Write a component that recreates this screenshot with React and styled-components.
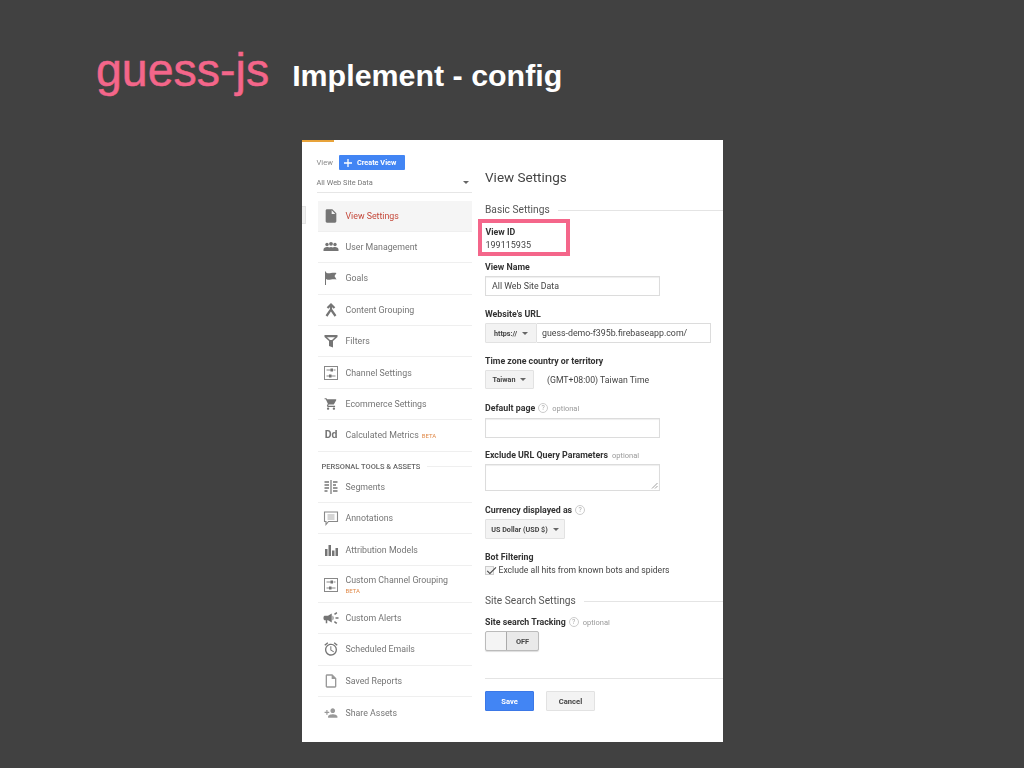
import React from 'react'
import styled, { createGlobalStyle } from 'styled-components'
import { MdInsertDriveFile, MdShoppingCart, MdCampaign, MdOutlineAccessAlarm, MdOutlineInsertDriveFile, MdPersonAdd, MdCheck } from 'react-icons/md'

const Global = createGlobalStyle`
  html, body { margin: 0; padding: 0; background: #414141; }
  * { box-sizing: border-box; }
`
const Slide = styled.div`
  width: 1024px;
  height: 768px;
  overflow: hidden;
  background: #414141;
  display: flex;
  flex-direction: column;
`
const TitleRow = styled.div`
  height: 140px;
  padding: 43px 0 0 96px;
  display: flex;
  align-items: flex-start;
  font-family: "Liberation Sans", Arial, sans-serif;
`
const MainTitle = styled.span`
  color: #f4668a;
  font-size: 46.5px;
  line-height: 54px;
  -webkit-text-stroke: 0.5px #f4668a;
`
const SubTitle = styled.span`
  color: #fff;
  font-size: 30.4px;
  font-weight: bold;
  line-height: 34px;
  margin: 15px 0 0 23px;
`
const Panel = styled.div`
  position: relative;
  align-self: center;
  width: 421px;
  height: 602px;
  background: #fff;
  display: flex;
  font-family: Roboto, "Liberation Sans", sans-serif;
  color: #333;
  filter: blur(0.35px);
`
const LoadBar = styled.div`
  position: absolute;
  left: 0;
  top: 0;
  width: 32px;
  height: 2px;
  background: #e8a33a;
`
const SideTab = styled.div`
  position: absolute;
  left: 0;
  top: 66px;
  width: 4px;
  height: 18px;
  background: #f0f0f0;
  border: 1px solid #e4e4e4;
  border-left: none;
`
const Sidebar = styled.div`
  width: 170px;
  padding: 15px 0 0 15px;
  flex: none;
`
const ViewHead = styled.div`
  display: flex;
  align-items: center;
  gap: 6px;
  height: 15px;
  font-size: 7.6px;
  color: #8a8a8a;
`
const CreateButton = styled.div`
  width: 66px;
  height: 15px;
  background: #4285f4;
  border-radius: 1px;
  color: #fff;
  font-size: 7.3px;
  font-weight: 700;
  display: flex;
  align-items: center;
  gap: 4px;
  padding-left: 4px;
`
const ViewSelect = styled.div`
  margin-top: 7px;
  height: 16px;
  padding: 0 3px 4px 0;
  border-bottom: 1px solid #e6e6e6;
  display: flex;
  align-items: center;
  justify-content: space-between;
  font-size: 7.4px;
  color: #777;
`
const Caret = styled.span`
  display: inline-block;
  width: 0;
  height: 0;
  border-left: ${p => p.$size || 3}px solid transparent;
  border-right: ${p => p.$size || 3}px solid transparent;
  border-top: ${p => p.$size || 3}px solid ${p => p.$color || '#666'};
`
const NavList = styled.div`
  margin: 7.5px 0 0 1px;
`
const NavItem = styled.div`
  height: ${p => p.$height || 31.4}px;
  padding-top: ${p => p.$pad || 0}px;
  display: flex;
  align-items: center;
  border-bottom: 1px solid #efefef;
  background: ${p => (p.$active ? '#f5f5f5' : 'transparent')};
  color: ${p => (p.$active ? '#c5483a' : '#757575')};
  font-size: 8.8px;
  &:last-child {
    border-bottom: none;
  }
`
const IconSlot = styled.span`
  width: 27px;
  margin-right: 1px;
  display: flex;
  justify-content: center;
  flex: none;
  color: ${p => p.$color || '#757575'};
  font-size: 16px;
  line-height: 1;
`
const DdIcon = styled.span`
  font-size: 10.5px;
  font-weight: 700;
`
const Beta = styled.span`
  color: #e08a4a;
  font-size: 6px;
  margin-left: 3px;
`
const BetaLine = styled.div`
  color: #e08a4a;
  font-size: 6px;
  margin-top: 2px;
`
const NavHeader = styled.div`
  height: 20px;
  display: flex;
  align-items: center;
  gap: 7px;
  padding: 10px 0 0 4px;
  font-size: 7.5px;
  font-weight: 500;
  color: #666;
  white-space: nowrap;
  &::after {
    content: '';
    flex: 1;
    height: 1px;
    background: #efefef;
  }
`
const Content = styled.div`
  flex: 1;
  padding: 29px 0 0 13.5px;
  min-width: 0;
`
const PageTitle = styled.div`
  font-size: 13.5px;
  line-height: 16px;
  color: #444;
`
const SectionTitle = styled.div`
  margin-top: ${p => p.$top}px;
  display: flex;
  align-items: center;
  gap: 8px;
  font-size: 10.2px;
  line-height: 14px;
  color: #555;
  white-space: nowrap;
  &::after {
    content: '';
    flex: 1;
    height: 1px;
    background: #e4e4e4;
  }
`
const HighlightBox = styled.div`
  width: 92px;
  height: 37px;
  margin: 2px 0 0 -7px;
  padding: 2.5px 0 0 3.5px;
  border: 4px solid #f4668a;
`
const Label = styled.div`
  margin-top: ${p => p.$top || 0}px;
  display: flex;
  align-items: center;
  gap: 3px;
  height: 12px;
  font-size: 8.8px;
  font-weight: 700;
  color: #333;
  white-space: nowrap;
`
const Value = styled.div`
  font-size: 9px;
  line-height: 12px;
  margin-top: 1.5px;
  color: #444;
`
const Help = styled.span`
  width: 10px;
  height: 10px;
  border: 1px solid #ccc;
  border-radius: 50%;
  color: #aaa;
  font-size: 7px;
  font-weight: 400;
  display: inline-flex;
  align-items: center;
  justify-content: center;
`
const Optional = styled.span`
  color: #999;
  font-size: 7.5px;
  font-weight: 400;
  margin-left: 1px;
`
const Input = styled.div`
  width: ${p => p.$width || 175}px;
  height: ${p => p.$height || 20}px;
  margin-top: ${p => p.$top ?? 3}px;
  padding-left: 6px;
  position: relative;
  display: flex;
  align-items: center;
  border: 1px solid #dcdcdc;
  box-shadow: inset 0 1px 1px #eee;
  font-size: 8.8px;
  color: #444;
`
const UrlRow = styled.div`
  margin-top: 3px;
  display: flex;
  width: 226px;
  height: 20px;
`
const GreyButton = styled.div`
  width: ${p => p.$width}px;
  height: ${p => p.$height || 20}px;
  flex: none;
  display: flex;
  align-items: center;
  justify-content: center;
  gap: 5px;
  background: #f3f3f3;
  border: 1px solid #e2e2e2;
  border-radius: 1px;
  font-size: 7.2px;
  font-weight: 700;
  color: #444;
`
const UrlInput = styled.div`
  flex: 1;
  display: flex;
  align-items: center;
  padding-left: 5px;
  border: 1px solid #dcdcdc;
  border-left: none;
  font-size: 8.8px;
  color: #444;
`
const ZoneRow = styled.div`
  margin-top: 3px;
  display: flex;
  align-items: center;
  gap: 13px;
  font-size: 8.7px;
  color: #444;
`
const ResizeGrip = styled.svg`
  position: absolute;
  right: 1px;
  bottom: 1px;
`
const CheckRow = styled.div`
  margin-top: 2px;
  display: flex;
  align-items: center;
  gap: 4.5px;
  font-size: 8.65px;
  color: #444;
`
const CheckBox = styled.span`
  width: 9px;
  height: 9px;
  flex: none;
  position: relative;
  background: #f2f2f2;
  border: 1px solid #ccc;
  display: inline-block;
  & svg {
    position: absolute;
    left: -1px;
    top: -3px;
    color: #444;
  }
`
const Toggle = styled.div`
  margin-top: 3px;
  width: 54px;
  height: 20px;
  display: flex;
  border: 1px solid #bbb;
  border-radius: 2px;
  background: #e9e9e9;
  box-shadow: 0 1px 1px #ddd;
  font-size: 7.4px;
  font-weight: 700;
  color: #444;
`
const Knob = styled.div`
  width: 21px;
  background: #f4f4f4;
  border-right: 1px solid #aaa;
  border-radius: 2px 0 0 2px;
`
const ToggleText = styled.div`
  flex: 1;
  display: flex;
  align-items: center;
  justify-content: center;
`
const Divider = styled.div`
  margin-top: 27px;
  height: 1px;
  background: #e4e4e4;
`
const ButtonRow = styled.div`
  margin-top: 12px;
  display: flex;
  gap: 12px;
`
const ActionButton = styled.div`
  width: 49px;
  height: 20px;
  display: flex;
  align-items: center;
  justify-content: center;
  border-radius: 1px;
  font-size: 7.6px;
  font-weight: 700;
  background: ${p => (p.$primary ? '#4285f4' : '#f3f3f3')};
  border: 1px solid ${p => (p.$primary ? '#3b78e7' : '#e2e2e2')};
  color: ${p => (p.$primary ? '#fff' : '#444')};
`

const Svg = ({ children }) => (
  <svg width="16" height="16" viewBox="0 0 16 16">{children}</svg>
)
const PeopleIcon = () => (
  <Svg>
    <circle cx="4" cy="5.500" r="1.700" fill="#757575" />
    <circle cx="8" cy="4.800" r="1.900" fill="#757575" />
    <circle cx="12" cy="5.500" r="1.700" fill="#757575" />
    <path d="M.5 12v-1.500c0-1.500 1.500-2.500 3.500-2.500 1 0 1.500.2 2 .4.6-.3 1.200-.5 2-.5s1.400.2 2 .5c.5-.2 1-.4 2-.4 2 0 3.500 1 3.500 2.500V12z" fill="#757575" />
  </Svg>
)
const FlagIcon = () => (
  <Svg>
    <path d="M2 1.500h1v13.500H2z" fill="#757575" />
    <path d="M3 2.500c2 1 3 1 5 .5s4-.5 5.500 0l-2 3 2 3.500c-2-.5-3.500-.5-5.500 0s-3 .5-5-.5z" fill="#757575" />
  </Svg>
)
const MergeIcon = () => (
  <Svg>
    <path d="M4.500 6L8 2.500 11.500 6M8 3v4.500L3.500 14M8 7.500l4.500 6.500" fill="none" stroke="#757575" strokeWidth="2.200" />
  </Svg>
)
const FilterIcon = () => (
  <Svg>
    <path d="M1.500 2h13v2l-4.500 4v6.500l-4-1.500v-5L1.500 4z" fill="#757575" />
    <path d="M4 4.200h8L9 7H7z" fill="#fff" />
  </Svg>
)
const ChannelIcon = () => (
  <Svg>
    <rect x="1.500" y="1.500" width="13" height="13" fill="none" stroke="#888" />
    <path d="M3.500 5h5M3.500 11h3M8 11h4.500M10.500 5h2" stroke="#888" fill="none" />
    <rect x="7.500" y="3.500" width="2.500" height="3" fill="#757575" />
    <rect x="6" y="9.500" width="2.500" height="3" fill="#757575" />
  </Svg>
)
const SegmentsIcon = () => (
  <Svg>
    <path d="M8 1v14" stroke="#757575" strokeWidth="1.200" />
    <path d="M1.500 3h4.500M1.500 6h4.500M1.500 9h4.500M1.500 12h3M10 3h4.500M10 6h3M10 9h4.500M10 12h4.500" stroke="#757575" strokeWidth="1.300" />
  </Svg>
)
const AnnotationIcon = () => (
  <Svg>
    <path d="M1.500 2h13v9.500H5.500l-2.500 3v-3H1.500z" fill="none" stroke="#888" strokeWidth="1.100" />
    <path d="M4.500 5h7M4.500 7h7M4.500 9h7" stroke="#aaa" strokeWidth="1" />
  </Svg>
)
const BarsIcon = () => (
  <Svg>
    <path d="M2 7h2.500v7H2zM5.500 3h2.500v11H5.500zM9 8.500h2.500V14H9zM12.500 6H15v8h-2.500z" fill="#757575" />
  </Svg>
)

const topItems = [
  { icon: <MdInsertDriveFile />, label: 'View Settings', active: true },
  { icon: <PeopleIcon />, label: 'User Management' },
  { icon: <FlagIcon />, label: 'Goals' },
  { icon: <MergeIcon />, label: 'Content Grouping' },
  { icon: <FilterIcon />, label: 'Filters' },
  { icon: <ChannelIcon />, label: 'Channel Settings' },
  { icon: <MdShoppingCart size={14} />, label: 'Ecommerce Settings' },
  { icon: <DdIcon>Dd</DdIcon>, label: 'Calculated Metrics', beta: true },
]
const bottomItems = [
  { icon: <SegmentsIcon />, label: 'Segments' },
  { icon: <AnnotationIcon />, label: 'Annotations' },
  { icon: <BarsIcon />, label: 'Attribution Models' },
  { icon: <ChannelIcon />, label: 'Custom Channel Grouping', betaLine: true, height: 37, pad: 2 },
  { icon: <MdCampaign size={18} />, label: 'Custom Alerts' },
  { icon: <MdOutlineAccessAlarm />, label: 'Scheduled Emails' },
  { icon: <MdOutlineInsertDriveFile />, color: '#999', label: 'Saved Reports' },
  { icon: <MdPersonAdd size={14} />, color: '#999', label: 'Share Assets' },
]

function Item({ item }) {
  return (
    <NavItem $active={item.active} $height={item.height} $pad={item.pad}>
      <IconSlot $color={item.color}>{item.icon}</IconSlot>
      <div>
        {item.label}
        {item.beta && <Beta>BETA</Beta>}
        {item.betaLine && <BetaLine>BETA</BetaLine>}
      </div>
    </NavItem>
  )
}

export default function App() {
  return (
    <Slide>
      <Global />
      <TitleRow>
        <MainTitle>guess-js</MainTitle>
        <SubTitle>Implement - config</SubTitle>
      </TitleRow>
      <Panel>
        <LoadBar />
        <SideTab />
        <Sidebar>
          <ViewHead>
            View
            <CreateButton>
              <svg width="10" height="10" viewBox="0 0 10 10"><path d="M5 1v8M1 5h8" stroke="#fff" strokeWidth="1.300" /></svg>
              Create View
            </CreateButton>
          </ViewHead>
          <ViewSelect>
            All Web Site Data
            <Caret $color="#666" />
          </ViewSelect>
          <NavList>
            {topItems.map(item => <Item key={item.label} item={item} />)}
            <NavHeader>PERSONAL TOOLS &amp; ASSETS</NavHeader>
            {bottomItems.map(item => <Item key={item.label} item={item} />)}
          </NavList>
        </Sidebar>
        <Content>
          <PageTitle>View Settings</PageTitle>
          <SectionTitle $top={18}>Basic Settings</SectionTitle>
          <HighlightBox>
            <Label>View ID</Label>
            <Value>199115935</Value>
          </HighlightBox>
          <Label $top={5}>View Name</Label>
          <Input>All Web Site Data</Input>
          <Label $top={12}>Website's URL</Label>
          <UrlRow>
            <GreyButton $width={52}>https:// <Caret /></GreyButton>
            <UrlInput>guess-demo-f395b.firebaseapp.com/</UrlInput>
          </UrlRow>
          <Label $top={12}>Time zone country or territory</Label>
          <ZoneRow>
            <GreyButton $width={49} $height={19}>Taiwan <Caret /></GreyButton>
            (GMT+08:00) Taiwan Time
          </ZoneRow>
          <Label $top={13}>Default page <Help>?</Help> <Optional>optional</Optional></Label>
          <Input $top={4} />
          <Label $top={11}>Exclude URL Query Parameters <Optional>optional</Optional></Label>
          <Input $height={27}>
            <ResizeGrip width="7" height="7" viewBox="0 0 7 7"><path d="M1 6.500L6.500 1M4 6.500L6.500 4" stroke="#777" strokeWidth="0.700" /></ResizeGrip>
          </Input>
          <Label $top={13}>Currency displayed as <Help>?</Help></Label>
          <UrlRow>
            <GreyButton $width={80}>US Dollar (USD $) <Caret /></GreyButton>
          </UrlRow>
          <Label $top={12}>Bot Filtering</Label>
          <CheckRow>
            <CheckBox><MdCheck size={13} /></CheckBox>
            Exclude all hits from known bots and spiders
          </CheckRow>
          <SectionTitle $top={19}>Site Search Settings</SectionTitle>
          <Label $top={8}>Site search Tracking <Help>?</Help> <Optional>optional</Optional></Label>
          <Toggle>
            <Knob />
            <ToggleText>OFF</ToggleText>
          </Toggle>
          <Divider />
          <ButtonRow>
            <ActionButton $primary>Save</ActionButton>
            <ActionButton>Cancel</ActionButton>
          </ButtonRow>
        </Content>
      </Panel>
    </Slide>
  )
}
